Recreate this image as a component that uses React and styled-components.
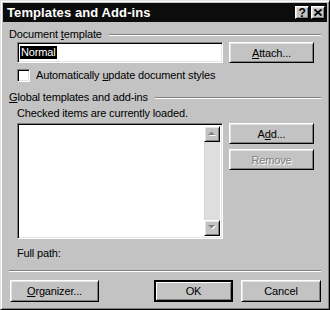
import React from 'react';
import styled, { createGlobalStyle, css } from 'styled-components';

const face = '#c3c3c3';
const light = '#e4e4e4';
const shadow = '#808080';
const dark = '#0c0c0c';

const GlobalStyle = createGlobalStyle`
  * { box-sizing: border-box; }
  body {
    margin: 0;
    background: #fff;
    font-family: "Liberation Sans", Arial, sans-serif;
    font-size: 11px;
    letter-spacing: -0.15px;
    color: #000;
  }
`;

const Window = styled.div`
  width: 330px;
  height: 310px;
  background: ${face};
  border: 1px solid;
  border-color: ${light} #000 #000 ${light};
  box-shadow: inset 1px 1px #fff, inset -1px -1px ${shadow};
  padding: 2px;
  display: flex;
  flex-direction: column;
`;

const TitleBar = styled.div`
  height: 19px;
  background: ${dark};
  display: flex;
  align-items: center;
  padding: 0 2px 0 4px;
`;

const Title = styled.div`
  flex: 1;
  color: #fff;
  font-weight: bold;
  font-size: 13px;
  letter-spacing: 0.1px;
`;

const raised = css`
  background: ${face};
  border: 1px solid;
  border-color: #fff #000 #000 #fff;
  box-shadow: inset 1px 1px ${light}, inset -1px -1px ${shadow};
`;

const sunken = css`
  border: 1px solid;
  border-color: ${shadow} #fff #fff ${shadow};
  box-shadow: inset 1px 1px #000, inset -1px -1px ${light};
`;

const CaptionButton = styled.div`
  ${raised};
  width: 14px;
  height: 13px;
  margin-left: ${(p) => (p.$gap ? '2px' : '0')};
  display: flex;
  align-items: center;
  justify-content: center;
  font-weight: bold;
  font-size: 12px;
  line-height: 1;
`;

const Body = styled.div`
  flex: 1;
  display: flex;
  flex-direction: column;
  padding: 0 6px 0 6px;
`;

const GroupHeader = styled.div`
  display: flex;
  align-items: center;
  height: 13px;
  margin-top: ${(p) => p.$top}px;
  gap: 7px;
`;

const Groove = styled.div`
  flex: 1;
  height: 2px;
  border-top: 1px solid ${shadow};
  border-bottom: 1px solid #fff;
`;

const Indent = styled.div`
  margin-left: 8px;
  margin-top: ${(p) => p.$top || 0}px;
  display: flex;
  align-items: ${(p) => p.$align || 'center'};
  gap: ${(p) => p.$gap || 0}px;
`;

const TextField = styled.div`
  ${sunken};
  background: #fff;
  width: 206px;
  height: 21px;
  padding: 3px 2px;
  display: flex;
  align-items: center;
`;

const Selected = styled.span`
  background: #000;
  color: #fff;
  padding: 0 1px;
  line-height: 13px;
`;

const Button = styled.div`
  ${raised};
  width: ${(p) => p.$w}px;
  height: ${(p) => p.$h || 21}px;
  margin-left: ${(p) => p.$ml || 0}px;
  display: flex;
  align-items: center;
  justify-content: center;
  color: ${(p) => (p.$disabled ? shadow : '#000')};
  text-shadow: ${(p) => (p.$disabled ? '1px 1px #fff' : 'none')};
  ${(p) =>
    p.$default &&
    css`
      border: 2px solid #000;
      border-color: #000;
      box-shadow: inset 1px 1px #fff, inset -1px -1px ${shadow};
    `}
`;

const Key = styled.span`
  text-decoration: underline;
  text-underline-offset: 1px;
`;

const CheckBox = styled.div`
  ${sunken};
  background: #fff;
  width: 13px;
  height: 13px;
`;

const Label = styled.div`
  line-height: 13px;
  white-space: nowrap;
`;

const ListBox = styled.div`
  ${sunken};
  background: #fff;
  width: 206px;
  height: 116px;
  display: flex;
  justify-content: flex-end;
  padding: 2px;
`;

const ScrollBar = styled.div`
  width: 16px;
  display: flex;
  flex-direction: column;
  justify-content: space-between;
  background: #dedede;
  border-left: 1px dotted #c6c6c6;
`;

const ScrollButton = styled.div`
  ${raised};
  width: 16px;
  height: 16px;
  margin-left: -1px;
  display: flex;
  align-items: center;
  justify-content: center;
`;

const ButtonColumn = styled.div`
  display: flex;
  flex-direction: column;
  gap: 5px;
`;

const Separator = styled.div`
  height: 2px;
  margin-top: 10px;
  border-top: 1px solid ${shadow};
  border-bottom: 1px solid #fff;
`;

const Footer = styled.div`
  display: flex;
  margin-top: 8px;
  padding-left: 1px;
`;

const Spacer = styled.div`
  flex: 1;
`;

function Arrow({ down }) {
  return (
    <svg width="8" height="6" viewBox="0 0 8 6">
      <polygon
        points={down ? '1,1 8,1 4.5,4.5' : '4.5,1.5 8,5 1,5'}
        fill="#fff"
      />
      <polygon points={down ? '0,0 7,0 3.5,3.5' : '3.5,0.5 7,4 0,4'} fill={shadow} />
    </svg>
  );
}

function CloseGlyph() {
  return (
    <svg width="8" height="7" viewBox="0 0 8 7">
      <path d="M0.5 0.5 L7.5 6.5 M7.5 0.5 L0.5 6.5" stroke="#000" strokeWidth="1.8" />
    </svg>
  );
}

export default function App() {
  return (
    <>
      <GlobalStyle />
      <Window>
        <TitleBar>
          <Title>Templates and Add-ins</Title>
          <CaptionButton>?</CaptionButton>
          <CaptionButton $gap>
            <CloseGlyph />
          </CaptionButton>
        </TitleBar>
        <Body>
          <GroupHeader $top={6}>
            <Label>
              Document <Key>t</Key>emplate
            </Label>
            <Groove />
          </GroupHeader>
          <Indent $top={1} $gap={6}>
            <TextField>
              <Selected>Normal</Selected>
            </TextField>
            <Button $w={85}>
              <Key>A</Key>ttach...
            </Button>
          </Indent>
          <Indent $top={6} $gap={6}>
            <CheckBox />
            <Label>
              Automatically <Key>u</Key>pdate document styles
            </Label>
          </Indent>
          <GroupHeader $top={9}>
            <Label>
              <Key>G</Key>lobal templates and add-ins
            </Label>
            <Groove />
          </GroupHeader>
          <Indent $top={3}>
            <Label>Checked items are currently loaded.</Label>
          </Indent>
          <Indent $top={3} $gap={6} $align="flex-start">
            <ListBox>
              <ScrollBar>
                <ScrollButton>
                  <Arrow />
                </ScrollButton>
                <ScrollButton>
                  <Arrow down />
                </ScrollButton>
              </ScrollBar>
            </ListBox>
            <ButtonColumn>
              <Button $w={85}>
                A<Key>d</Key>d...
              </Button>
              <Button $w={85} $disabled>
                Remove
              </Button>
            </ButtonColumn>
          </Indent>
          <Indent $top={8}>
            <Label>Full path:</Label>
          </Indent>
          <Separator />
          <Footer>
            <Button $w={89} $h={22}>
              <Key>O</Key>rganizer...
            </Button>
            <Spacer />
            <Button $w={79} $h={22} $default>
              OK
            </Button>
            <Button $w={80} $h={22} $ml={8}>
              Cancel
            </Button>
          </Footer>
        </Body>
      </Window>
    </>
  );
}
